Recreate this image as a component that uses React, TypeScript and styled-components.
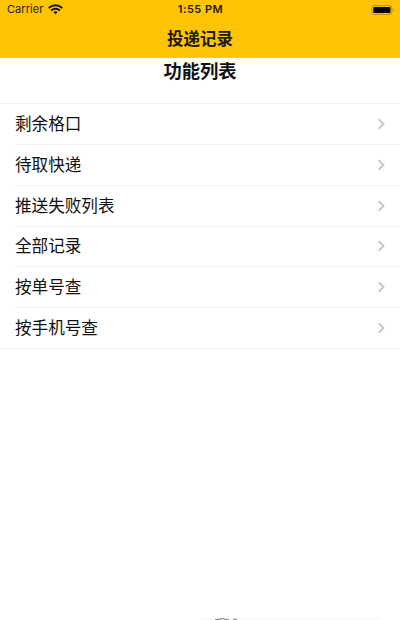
import React from "react";
import styled, { createGlobalStyle } from "styled-components";

const GlobalStyle = createGlobalStyle`
  *, *::before, *::after { box-sizing: border-box; }
  html, body { margin: 0; padding: 0; background: #fff; overflow: hidden; }
`;

const Screen = styled.main`
  display: flex;
  flex-direction: column;
  width: 400px;
  height: 620px;
  overflow: hidden;
  background: #fff;
  color: #111;
  font-family: Inter, "Noto Sans CJK SC", sans-serif;
`;

const Header = styled.header`
  flex: none;
  height: 58px;
  background: #ffc403;
  border-bottom: 1px solid #ffca20;
`;

const StatusBar = styled.div`
  display: grid;
  grid-template-columns: 1fr auto 1fr;
  align-items: center;
  height: 19px;
  padding: 0 5px 0 6px;
  color: #2a2003;
  font-size: 11px;
  line-height: 19px;
`;

const Carrier = styled.div`
  display: flex;
  align-items: center;
  gap: 5px;
  padding-left: 1px;
  letter-spacing: 0.05px;
`;

const Clock = styled.time`
  font-weight: 600;
  font-size: 11px;
  letter-spacing: 0.5px;
`;

const BatterySlot = styled.div`
  display: flex;
  justify-content: flex-end;
`;

const NavTitle = styled.h1`
  margin: 0;
  height: 38px;
  font-size: 16.5px;
  font-weight: 700;
  line-height: 40px;
  text-align: center;
  color: #211a05;
`;

const SectionTitle = styled.h2`
  flex: none;
  margin: 0;
  height: 44.6px;
  font-size: 18.3px;
  font-weight: 700;
  line-height: 27px;
  text-align: center;
`;

const List = styled.ul`
  flex: none;
  margin: 0;
  padding: 0;
  list-style: none;
  border-top: 1px solid #f1f1f1;
  border-bottom: 1px solid #f3f3f3;
`;

const Row = styled.li`
  display: flex;
  align-items: center;
  justify-content: space-between;
  height: 40.7px;
  margin-left: 15px;
  padding-right: 14px;
  font-size: 16.6px;
  line-height: 24px;

  & + & {
    border-top: 1px solid #f2f2f2;
    padding-bottom: 0.5px;
  }
`;

const Footer = styled.footer`
  display: flex;
  flex: none;
  width: 180px;
  height: 2px;
  margin: auto 20px 0 auto;
  background: #f8f8f8;
`;

const Wifi = () => (
  <svg width="15" height="11" viewBox="0 0 15 11" fill="none" stroke="#171203" strokeWidth="1.9">
    <path d="M.7 4Q7.5-1.3 14.3 4M3.1 6.4Q7.5 3 11.9 6.4" />
    <path d="M5.4 8.1Q7.5 6.5 9.6 8.1L7.5 10.2Z" fill="#171203" stroke="none" />
  </svg>
);

const Battery = () => (
  <svg width="24" height="10" viewBox="0 0 24 10">
    <rect x="0.9" y="0.6" width="20" height="8.8" rx="2.3" fill="none" stroke="#ad8608" strokeWidth="0.9" />
    <rect x="2.3" y="2" width="17.2" height="6" rx="1" fill="#070500" />
    <path d="M22 3.6Q23.3 5 22 6.4Z" fill="#8f6e05" />
  </svg>
);

const Chevron = () => (
  <svg width="10" height="12" viewBox="0 0 10 12" fill="none" stroke="#c6c6c8" strokeWidth="1.9">
    <path d="M2.7 1.3L7.5 6L2.7 10.7" />
  </svg>
);

const items = ["剩余格口", "待取快递", "推送失败列表", "全部记录", "按单号查", "按手机号查"];

export default function App() {
  return (
    <>
      <GlobalStyle />
      <Screen>
        <Header>
          <StatusBar>
            <Carrier>Carrier<Wifi /></Carrier>
            <Clock>1:55 PM</Clock>
            <BatterySlot><Battery /></BatterySlot>
          </StatusBar>
          <NavTitle>投递记录</NavTitle>
        </Header>
        <SectionTitle>功能列表</SectionTitle>
        <List>
          {items.map((item) => (
            <Row key={item}><span>{item}</span><Chevron /></Row>
          ))}
        </List>
        <Footer>
          <svg width="50" height="2" viewBox="0 0 50 2" fill="none" stroke="#777">
            <path d="M15 2Q22-.9 29 2M33 2Q35 0 37 2" />
          </svg>
        </Footer>
      </Screen>
    </>
  );
}
